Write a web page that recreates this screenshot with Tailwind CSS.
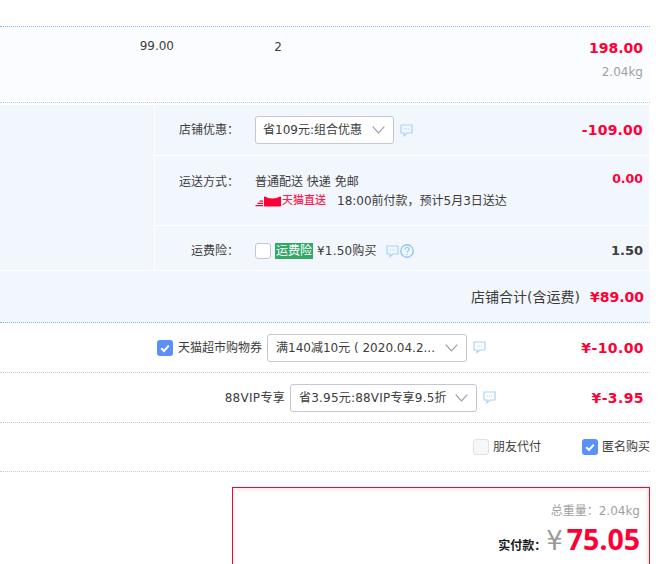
<!DOCTYPE html>
<html lang="zh">
<head>
<meta charset="utf-8">
<script src="https://cdn.jsdelivr.net/npm/@tailwindcss/browser@4"></script>
</head>
<body class="bg-white">
<svg width="0" height="0" class="absolute">
  <defs>
    <symbol id="msg" viewBox="0 0 13 13">
      <path d="M1 1h11v8H7l-3 2.600V9H1z" fill="none" stroke="#a9d3f5" stroke-width="1.200"/>
      <path d="M4 5h1M6 5h1M8 5h1" stroke="#a9d3f5" stroke-width="1"/>
    </symbol>
    <symbol id="chev" viewBox="0 0 13 8">
      <path d="M.7.7 6.500 6.900 12.300.7" fill="none" stroke="#9a9aa6" stroke-width="1.100"/>
    </symbol>
    <symbol id="tick" viewBox="0 0 16 16">
      <rect width="16" height="16" rx="3" fill="#5b8ff9"/>
      <path d="M4.200 8.200 7 11l4.800-5.400" fill="none" stroke="#fff" stroke-width="2"/>
    </symbol>
  </defs>
</svg>
<div class="w-[650px] h-[564px] overflow-hidden text-[12px] leading-[16px] text-[#3c3c3c] font-['DejaVu_Sans','Noto_Sans_CJK_SC',sans-serif]">
  <div class="h-[26px]"></div>

  <div class="h-[76px] bg-[#fbfcff] border-t border-dotted border-[#80b2ff] flex">
    <div class="w-[174px] pt-[11px] text-right">99.00</div>
    <div class="w-[108px] pt-[12px] text-right">2</div>
    <div class="flex-1 pr-[7px] pt-[12px] text-right">
      <div class="font-bold text-[14px] leading-[18px] text-[#ff0036]">198.00</div>
      <div class="mt-[7px] text-[#a0a0a0]">2.04kg</div>
    </div>
  </div>
  <div class="h-[3px] border-t border-dotted border-[#cccccc]"></div>

  <div class="w-[649px] flex bg-[#f2f6fd] border-b border-white">
    <div class="w-[154px]"></div>
    <div class="flex-1 border-l border-white">
      <div class="h-[51px] flex items-center border-b border-white pr-[6px]">
        <div class="w-[84px] text-right">店铺优惠：</div>
        <div class="ml-[16px] w-[139px] h-[28px] bg-white border border-[#c5c5d3] rounded-[3px] flex items-center justify-between pl-[7px] pr-[8px]">
          <span>省109元:组合优惠</span>
          <svg class="w-[13px] h-[8px]"><use href="#chev"/></svg>
        </div>
        <svg class="ml-[6px] w-[13px] h-[13px]"><use href="#msg"/></svg>
        <div class="flex-1 text-right font-bold text-[14px] tracking-[0.2px] text-[#ff0036]">-109.00</div>
      </div>
      <div class="h-[70px] flex items-start border-b border-white pr-[6px] pt-[18px]">
        <div class="w-[84px] text-right">运送方式：</div>
        <div class="ml-[16px]">
          <div class="h-[16px]">普通配送 快递 免邮</div>
          <div class="flex items-center h-[16px] mt-[3px]">
            <svg class="w-[26px] h-[11px]" viewBox="0 0 26 11">
              <path d="M4.500 4.500h3.500v1.300H4.500zM2.500 6.800h5.500v1.300H2.500zM.5 9h7.500v1.300H.5z" fill="#ff0036"/>
              <path d="M10 .5c2 1.200 4 2 7.500 2s5.500-.8 7.500-2c.6-.3 1 0 1 .7v8.300c0 .7-.4 1-1 1H10c-.6 0-1-.3-1-1V1.200c0-.7.400-1 1-.7z" fill="#ff0036"/>
            </svg>
            <span class="ml-[1px] text-[#ff1f50] text-[11px] font-medium">天猫直送</span>
            <span class="ml-[11px]">18:00前付款，预计5月3日送达</span>
          </div>
        </div>
        <div class="flex-1 -mt-[3px] text-right font-bold text-[12.500px] text-[#ff0036]">0.00</div>
      </div>
      <div class="h-[44px] flex items-center pr-[6px] pt-[6px]">
        <div class="w-[84px] text-right">运费险：</div>
        <div class="ml-[16px] w-[16px] h-[16px] bg-white border border-[#c5c5d3] rounded-[3px]"></div>
        <span class="ml-[4px] px-[1px] bg-[#34a868] text-white">运费险</span>
        <span class="ml-[4px] tracking-[0.2px]">¥1.50购买</span>
        <svg class="ml-[9px] w-[13px] h-[13px]"><use href="#msg"/></svg>
        <svg class="ml-[1px] w-[14px] h-[14px]" viewBox="0 0 13 13">
          <circle cx="6.500" cy="6.500" r="5.800" fill="none" stroke="#8cc4f2" stroke-width="1.200"/>
          <path d="M4.700 5c0-2.300 3.700-2.300 3.700 0 0 1.400-1.900 1.400-1.900 3" fill="none" stroke="#8cc4f2" stroke-width="1.100"/>
          <path d="M6 9.200h1v1H6z" fill="#8cc4f2"/>
        </svg>
        <div class="flex-1 text-right font-bold text-[13px]">1.50</div>
      </div>
    </div>
  </div>

  <div class="h-[52px] bg-[#f2f6fd] border-b border-dotted border-[#80b2ff] flex items-center justify-end pr-[6px]">
    <span class="text-[14px]">店铺合计(含运费)</span>
    <span class="ml-[10px] font-bold text-[14px] text-[#ff0036]">¥89.00</span>
  </div>

  <div class="h-[50px] border-b border-dotted border-[#cccccc] flex items-center justify-end pr-[6px]">
    <svg class="w-[16px] h-[16px]"><use href="#tick"/></svg>
    <span class="ml-[5px]">天猫超市购物券</span>
    <div class="ml-[5px] w-[200px] h-[28px] bg-white border border-[#c5c5d3] rounded-[3px] flex items-center justify-between pl-[8px] pr-[8px]">
      <span>满140减10元 ( 2020.04.2...</span>
      <svg class="w-[13px] h-[8px]"><use href="#chev"/></svg>
    </div>
    <svg class="ml-[6px] w-[13px] h-[13px]"><use href="#msg"/></svg>
    <div class="w-[86px] text-[#ff0036] text-right font-bold text-[14px] tracking-[0.4px] ml-[72px] shrink-0">¥-10.00</div>
  </div>

  <div class="h-[50px] border-b border-dotted border-[#cccccc] flex items-center justify-end pr-[6px]">
    <span class="tracking-[0.3px]">88VIP专享</span>
    <div class="ml-[5px] w-[187px] h-[28px] bg-white border border-[#c5c5d3] rounded-[3px] flex items-center justify-between pl-[8px] pr-[8px]">
      <span class="tracking-[0.2px]">省3.95元:88VIP专享9.5折</span>
      <svg class="w-[13px] h-[8px]"><use href="#chev"/></svg>
    </div>
    <svg class="ml-[6px] w-[13px] h-[13px]"><use href="#msg"/></svg>
    <div class="w-[86px] text-[#ff0036] text-right font-bold text-[14px] tracking-[0.4px] ml-[62px] shrink-0">¥-3.95</div>
  </div>

  <div class="h-[49px] border-b border-dotted border-[#cccccc] flex items-center justify-end">
    <div class="w-[16px] h-[16px] bg-[#f5f7fa] border border-[#dfe1e8] rounded-[3px]"></div>
    <span class="ml-[4px]">朋友代付</span>
    <svg class="ml-[41px] w-[16px] h-[16px]"><use href="#tick"/></svg>
    <span class="ml-[4px]">匿名购买</span>
  </div>

  <div class="ml-[232px] mt-[15px] h-[90px] border border-[#ff0036]">
    <div class="h-full border-t-[3px] border-r-[3px] border-[#fff0e8] bg-white pt-[12px] pr-[6px] text-right">
      <div class="text-[#a0a0a0]">总重量：2.04kg</div>
      <div class="flex items-baseline justify-end h-[36px] mt-[2px]">
        <span class="font-bold text-[#1a1a1a]">实付款：</span>
        <span class="text-[26px] leading-[36px] text-[#999999]">¥</span>
        <span class="ml-[4px] font-bold text-[28.500px] leading-[36px] text-[#ff0036] font-['Noto_Sans',sans-serif]">75.05</span>
      </div>
    </div>
  </div>
</div>
</body>
</html>
